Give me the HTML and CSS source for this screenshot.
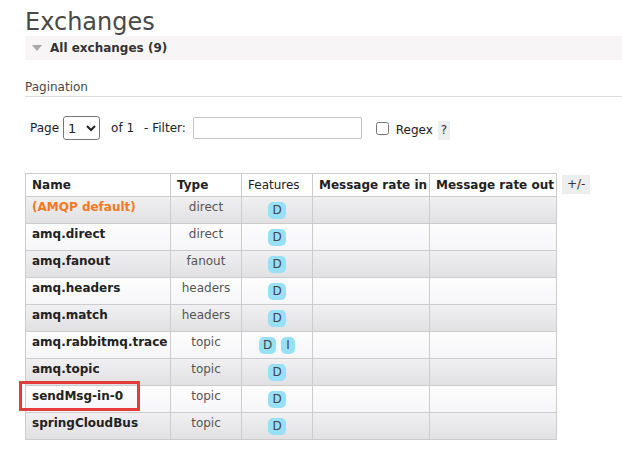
FILE: index.html
```html
<!DOCTYPE html>
<html>
<head>
<meta charset="utf-8">
<title>Exchanges</title>
<link rel="stylesheet" href="styles.css">
</head>
<body>
<main class="page">
  <h1 class="title">Exchanges</h1>
  <div class="section-head">
    <span class="tri"></span>
    <h2 class="section-title">All exchanges (9)</h2>
  </div>
  <h3 class="sub">Pagination</h3>
  <div class="pager">
    <span class="lbl">Page</span>
    <select class="page-select"><option>1</option></select>
    <span class="of">of 1</span>
    <span class="flt">- Filter:</span>
    <input class="filter" type="text">
    <input class="chk" type="checkbox">
    <span class="regex">Regex</span>
    <span class="help">?</span>
  </div>
  <div class="table-wrap">
    <table class="list">
      <thead>
        <tr>
          <th class="c-name">Name</th>
          <th class="c-type">Type</th>
          <th class="c-feat plain">Features</th>
          <th class="c-in">Message rate in</th>
          <th class="c-out">Message rate out</th>
        </tr>
      </thead>
      <tbody>
        <tr class="alt1"><td class="name default">(AMQP default)</td><td class="type">direct</td><td class="feat"><span class="badge">D</span></td><td></td><td></td></tr>
        <tr class="alt2"><td class="name">amq.direct</td><td class="type">direct</td><td class="feat"><span class="badge">D</span></td><td></td><td></td></tr>
        <tr class="alt1"><td class="name">amq.fanout</td><td class="type">fanout</td><td class="feat"><span class="badge">D</span></td><td></td><td></td></tr>
        <tr class="alt2"><td class="name">amq.headers</td><td class="type">headers</td><td class="feat"><span class="badge">D</span></td><td></td><td></td></tr>
        <tr class="alt1"><td class="name">amq.match</td><td class="type">headers</td><td class="feat"><span class="badge">D</span></td><td></td><td></td></tr>
        <tr class="alt2"><td class="name">amq.rabbitmq.trace</td><td class="type">topic</td><td class="feat"><span class="badge">D</span><span class="badge narrow">I</span></td><td></td><td></td></tr>
        <tr class="alt1"><td class="name">amq.topic</td><td class="type">topic</td><td class="feat"><span class="badge">D</span></td><td></td><td></td></tr>
        <tr class="alt2"><td class="name marked">sendMsg-in-0<span class="mark"></span></td><td class="type">topic</td><td class="feat"><span class="badge">D</span></td><td></td><td></td></tr>
        <tr class="alt1"><td class="name">springCloudBus</td><td class="type">topic</td><td class="feat"><span class="badge">D</span></td><td></td><td></td></tr>
      </tbody>
    </table>
    <span class="toggle">+/-</span>
  </div>
</main>
</body>
</html>
```
FILE: styles.css
```css
html, body {
  margin: 0;
  padding: 0;
  background: #fff;
}
body {
  font-family: "DejaVu Sans", Verdana, sans-serif;
  font-size: 12px;
  color: #333;
}
.page {
  padding-left: 25px;
}
.title {
  margin: 9px 0 0;
  font-size: 24px;
  line-height: 27px;
  font-weight: normal;
  color: #484848;
}
.section-head {
  height: 24px;
  background: #f7f5f6;
  display: flex;
  align-items: center;
}
.tri {
  width: 0;
  height: 0;
  margin-left: 7px;
  margin-right: 8px;
  border-left: 5px solid transparent;
  border-right: 5px solid transparent;
  border-top: 6px solid #a8a8a8;
}
.section-title {
  margin: 0;
  font-size: 12px;
  line-height: 18px;
  font-weight: bold;
  color: #333;
}
.sub {
  margin: 18px 0 0;
  font-size: 12px;
  line-height: 18px;
  font-weight: normal;
  color: #484848;
  border-bottom: 1px solid #ddd;
}
.pager {
  margin-top: 19px;
  height: 24px;
  display: flex;
  align-items: center;
  padding-left: 5px;
  color: #222;
}
.page-select {
  margin-left: 4px;
  width: 37px;
  height: 24px;
  font-family: "DejaVu Sans", Verdana, sans-serif;
  font-size: 13px;
  border: 1px solid #767676;
  border-radius: 3px;
  background: #fff;
  color: #222;
}
.of {
  margin-left: 11px;
}
.flt {
  margin-left: 10px;
}
.filter {
  margin: 0 0 0 7px;
  width: 169px;
  height: 22px;
  box-sizing: border-box;
  border: 1px solid #c8c8c8;
  border-radius: 1px;
  padding: 0 3px;
}
.chk {
  margin: 0 0 0 14px;
  width: 13px;
  height: 13px;
}
.regex {
  margin-left: 7px;
  position: relative;
  top: 2px;
}
.help {
  margin-left: 5px;
  padding: 0 3px;
  height: 19px;
  line-height: 19px;
  background: #eee;
  color: #333;
  position: relative;
  top: 2px;
}
.table-wrap {
  margin-top: 33px;
  display: flex;
  align-items: flex-start;
}
.list {
  border-collapse: separate;
  border-spacing: 0;
  table-layout: fixed;
  width: 532px;
  border-top: 1px solid #ccc;
  border-left: 1px solid #ccc;
}
.list th, .list td {
  border-right: 1px solid #ccc;
  border-bottom: 1px solid #ccc;
  padding: 0 6px;
  line-height: 18px;
  vertical-align: top;
  text-align: left;
  color: #222;
  white-space: nowrap;
}
.list th {
  padding-top: 2px;
  padding-bottom: 2px;
  background: #fff;
  font-weight: bold;
}
.list th.plain {
  font-weight: normal;
}
.c-name { width: 132px; }
.c-type { width: 58px; }
.c-feat { width: 58px; }
.c-in { width: 104px; }
.c-out { width: 114px; }
.list tbody tr {
  height: 27px;
}
.list td {
  padding-top: 1px;
}
.alt1 td {
  background: linear-gradient(#f0eff1, #e1e0e2);
}
.alt2 td {
  background: linear-gradient(#fefdfe, #f6f5f7);
}
.list td.name {
  font-weight: bold;
}
.list td.default {
  color: #ef7a22;
}
.list td.type {
  text-align: center;
  color: #555;
}
.list td.feat {
  text-align: center;
}
.badge {
  display: inline-block;
  line-height: 15px;
  padding: 1px 4px 1px;
  border-radius: 5px;
  background: #98e0f6;
  color: #444;
  vertical-align: -3px;
}
.badge.narrow {
  margin-left: 5px;
  padding: 1px 5px 1px;
}
.marked {
  position: relative;
}
.mark {
  position: absolute;
  left: -7px;
  top: -5px;
  width: 121px;
  height: 30px;
  box-sizing: border-box;
  border: 3px solid #e43b3b;
}
.toggle {
  margin: 2px 0 0 5px;
  padding: 0 5px;
  height: 19px;
  line-height: 19px;
  background: #eee;
  color: #333;
}
```
